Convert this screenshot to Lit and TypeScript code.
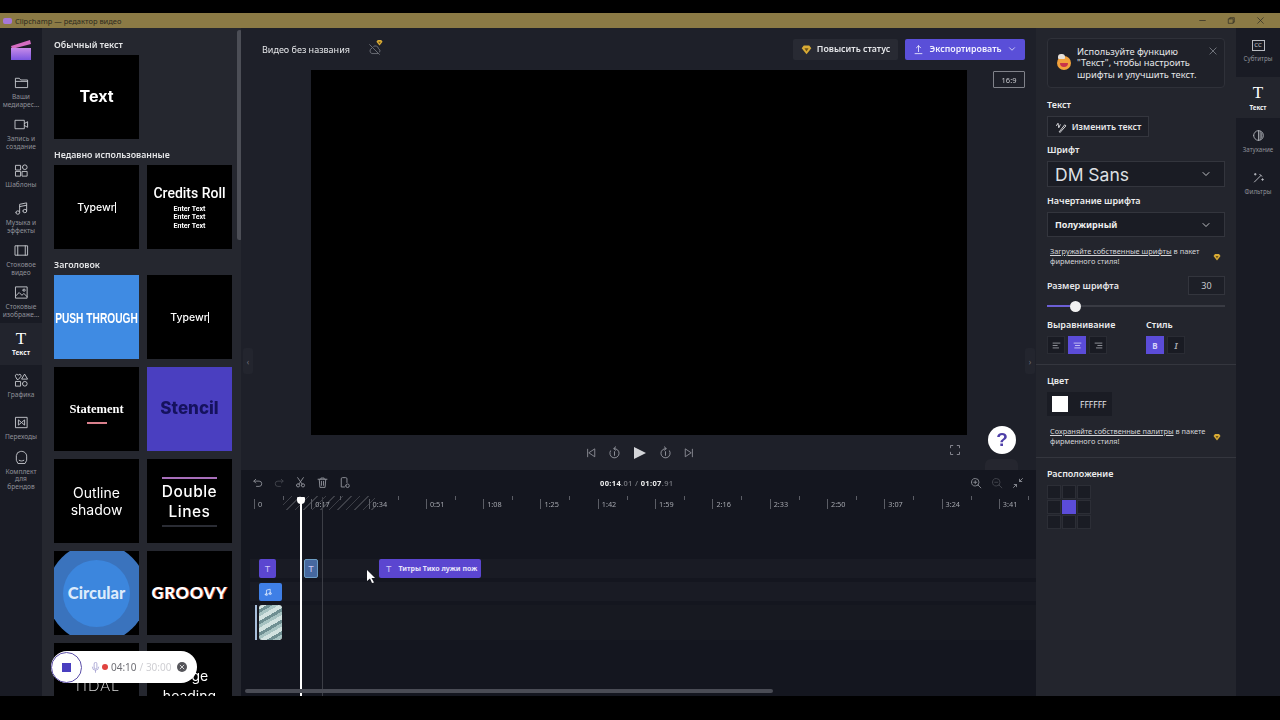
import { LitElement, html, css } from "lit";
import { customElement } from "lit/decorators.js";

const ic = (d: string, size = 14, sw = 1.2) => html`<svg class="ic" width=${size} height=${size} viewBox="0 0 16 16" fill="none" stroke="currentColor" stroke-width=${sw} stroke-linecap="round" stroke-linejoin="round"><path d=${d}></path></svg>`;

const I = {
  folder: "M1.5 13V3.5h4.2l1.4 1.8h7.4V13z M1.5 6.8h13",
  video: "M1.5 3.5h9.5v9H1.5z M11 7l3.5-2v6L11 9",
  tpl: "M2 2.5h5v5H2z M9 4.5a2.5 2.5 0 1 0 5 0a2.5 2.5 0 1 0-5 0 M2 9h5v5H2z M9 9h5v5H9z",
  music: "M6 12V3.5l7.5-1.5V10.5 M6 6l7.5-1.5 M2 12.3a2 1.8 0 1 0 4 0a2 1.8 0 1 0-4 0 M9.5 10.7a2 1.8 0 1 0 4 0a2 1.8 0 1 0-4 0",
  film: "M1.5 3h13v10h-13z M4 3v10 M12 3v10",
  image: "M2 2h12v12H2z M2 11.5l3.5-3.5 3 3 2-2 3.5 3.5 M9.5 5.5a1.2 1.2 0 1 0 2.4 0a1.2 1.2 0 1 0-2.4 0",
  shapes: "M3 6.5L1.5 3.5a1.4 1.4 0 0 1 3-1a1.4 1.4 0 0 1 3 1L5 6.5z M11.5 1.5l3 5h-6z M2 9h5v5H2z M9 11.5a2.5 2.5 0 1 0 5 0a2.5 2.5 0 1 0-5 0",
  trans: "M2 2.5h12v11H2z M5 5.5l3 2.5-3 2.5z M11 5.5L8 8l3 2.5z",
  brand: "M4 14l-1.5-3V6A5 5 0 0 1 7 1.5c3.5-.5 6.5 2 6.5 5V11L12 14z M5.5 11c1.5 1 3.5 1 5 0",
  undo: "M5 3L2.5 5.5 5 8 M2.5 5.5h7a3.5 3.5 0 0 1 0 7H6",
  redo: "M11 3l2.5 2.5L11 8 M13.5 5.5h-7a3.5 3.5 0 0 0 0 7H10",
  cut: "M3 11.5a2 2 0 1 0 4 0a2 2 0 1 0-4 0 M9 11.5a2 2 0 1 0 4 0a2 2 0 1 0-4 0 M6 10L11.5 2 M10 10L4.5 2",
  trash: "M2.5 4h11 M6 4V2.5h4V4 M4 4l.8 10h6.4L12 4 M6.7 6.5v5 M9.3 6.5v5",
  detach: "M8 13.5H4V3.5a1.5 1.5 0 0 1 1.5-1.5h4A1.5 1.5 0 0 1 11 3.5V8 M9.5 12a2.2 2.2 0 1 0 4.4 0a2.2 2.2 0 1 0-4.4 0",
  start: "M3.5 3v10 M13 3v10L5.5 8z",
  end: "M12.5 3v10 M3 3v10l7.5-5z",
  back: "M9.5 1L7 3.2 9.5 5.2 M7.5 3.2A5.7 5.7 0 1 1 3 6 M8 7v4.5",
  fwd: "M6.5 1L9 3.2 6.5 5.2 M8.5 3.2A5.7 5.7 0 1 0 13 6 M8 7v4.5",
  full: "M2 5V2h3 M11 2h3v3 M14 11v3h-3 M5 14H2v-3",
  zin: "M2 7a5 5 0 1 0 10 0a5 5 0 1 0-10 0 M10.5 10.5L14.5 14.5 M7 5v4 M5 7h4",
  zout: "M2 7a5 5 0 1 0 10 0a5 5 0 1 0-10 0 M10.5 10.5L14.5 14.5 M5 7h4",
  fit: "M14 2L10 6 M10 3v3h3 M2 14l4-4 M3 10h3v3",
  cloud: "M2 2l12 12 M4.5 6.5A3.5 3.5 0 0 0 4.8 13H12 M7 4a4 4 0 0 1 6 3a3 3 0 0 1 1.5 4",
  upload: "M8 11V2.5 M5 5.5l3-3 3 3 M3 14h10",
  chev: "M4 6l4 4 4-4",
  close: "M3 3l10 10 M13 3L3 13",
  pen: "M2 6l2-3 1 6 2-4 M6 14L13 5l1.5 1.5L7 15z",
  alignL: "M3 4.5h10 M3 8h6 M3 11.5h8",
  alignC: "M3 4.5h10 M5 8h6 M4 11.5h8",
  alignR: "M3 4.5h10 M7 8h6 M5 11.5h8",
  wand: "M3 13.5L11 5.5 M9.5 4l2.5 2.5 M4 3v2 M3 4h2 M13 9.5v2 M12 10.5h2",
  mic: "M6 2.5a2 2 0 0 1 4 0V8a2 2 0 0 1-4 0z M3.5 7.5a4.5 4.5 0 0 0 9 0 M8 12v3",
};

const gem = (size = 10) => html`<svg width=${size} height=${size} viewBox="0 0 16 16"><path d="M4 2h8l3 4-7 9-7-9z" fill="#d9ab35"></path><path d="M5 6h6l-3 5z" fill="#6d5316"></path></svg>`;

const railItems: [string, string, boolean?][] = [
  [I.folder, "Ваши\nмедиарес..."],
  [I.video, "Запись и\nсоздание"],
  [I.tpl, "Шаблоны"],
  [I.music, "Музыка и\nэффекты"],
  [I.film, "Стоковое\nвидео"],
  [I.image, "Стоковые\nизображе..."],
  ["T", "Текст", true],
  [I.shapes, "Графика"],
  [I.trans, "Переходы"],
  [I.brand, "Комплект\nдля\nбрендов"],
];

const ruler = ["0", "0:17", "0:34", "0:51", "1:08", "1:25", "1:42", "1:59", "2:16", "2:33", "2:50", "3:07", "3:24", "3:41"];

@customElement("app-root")
export class AppRoot extends LitElement {
  static styles = css`
    :host { display: block; width: 1280px; height: 720px; background: #000; overflow: hidden; font-family: "Noto Sans", "Liberation Sans", sans-serif; color: #e6e7ea; position: relative; }
    * { box-sizing: border-box; }
    svg { display: block; flex: none; }
    .screen { display: flex; flex-direction: column; height: 696px; padding-top: 13px; filter: blur(0.35px); }
    .title { height: 15px; flex: none; background: #8b7a45; display: flex; align-items: center; padding: 0 15px 0 3px; gap: 3px; font-size: 7.5px; color: #2c2a20; }
    .title .logo { width: 9px; height: 6px; background: #a678d8; border-radius: 2px; }
    .title .grow { flex: 1; }
    .win { display: flex; gap: 20px; color: #2a2822; }
    .app { flex: 1; min-height: 0; display: flex; }

    .rail { width: 42px; flex: none; background: #191b24; display: flex; flex-direction: column; align-items: stretch; overflow: hidden; }
    .brand { height: 43px; flex: none; display: flex; align-items: center; justify-content: center; }
    .ritem { height: 42px; flex: none; display: flex; flex-direction: column; align-items: center; justify-content: center; gap: 3px; font-size: 6.6px; line-height: 7.6px; text-align: center; color: #8f9199; white-space: pre-line; }
    .ritem svg { color: #c2c4ca; }
    .ritem.on { background: #22242d; color: #f2f2f4; font-weight: 700; }
    .bigt { font-family: "Liberation Serif", serif; font-size: 17px; line-height: 15px; color: #fff; font-weight: 400; }

    .lib { width: 199px; flex: none; background: #25272f; padding: 9px 0 0 12px; overflow: hidden; display: flex; flex-direction: column; position: relative; }
    .lib h3 { margin: 0; font-size: 8.8px; line-height: 16px; font-weight: 600; color: #e4e5e7; height: 18px; flex: none; }
    .lib .grid { display: grid; grid-template-columns: 85px 85px; gap: 8px; margin-bottom: 8px; flex: none; }
    .card { height: 84px; background: #000; display: flex; align-items: center; justify-content: center; text-align: center; color: #fff; overflow: hidden; position: relative; }
    .plain { font-family: Inter, sans-serif; font-weight: 700; font-size: 16px; padding-bottom: 2px; }
    .vscroll { position: absolute; right: -1px; top: 2px; width: 5px; height: 210px; background: #4c4e56; border-radius: 3px; }
    .push { background: #3f8be3; }
    .push text { font-family: "Liberation Sans", sans-serif; font-weight: 700; font-size: 10.2px; fill: #fff; }
    .typew { font-family: "Inter", sans-serif; font-weight: 500; font-size: 10.5px; }
    .typew i { display: inline-block; width: 1px; height: 11px; background: #fff; vertical-align: -2px; }
    .credits { flex-direction: column; font-family: Roboto, sans-serif; gap: 1px; font-weight: 700; font-size: 7px; line-height: 8.2px; }
    .credits b { font-size: 14px; line-height: 18px; font-weight: 500; margin-bottom: 2px; }
    .state { flex-direction: column; font-family: "Liberation Serif", serif; font-weight: 700; font-size: 12.5px; gap: 5px; padding-top: 8px; }
    .state i { width: 20px; height: 2px; background: #d9808c; }
    .stencil { background: #4a3fc0; color: #15125e; font-family: Inter, sans-serif; font-weight: 800; font-size: 17px; padding-bottom: 2px; }
    .outline { font-family: Inter, sans-serif; font-size: 14px; line-height: 17px; font-weight: 400; }
    .double { flex-direction: column; font-family: Inter, sans-serif; font-size: 15.5px; line-height: 20px; letter-spacing: .5px; font-weight: 500; padding-top: 1px; }
    .double i { width: 55px; height: 2px; background: #a86fbb; flex: none; }
    .double i.a { margin-bottom: 3px; }
    .double i.b { margin-top: 3px; }
    .outerc { width: 100px; height: 100px; flex: none; border-radius: 50%; background: #3a73bd; display: flex; align-items: center; justify-content: center; }
    .innerc { width: 67px; height: 67px; border-radius: 50%; background: #3c86dd; display: flex; align-items: center; justify-content: center; font-family: Lato, sans-serif; font-weight: 900; font-size: 16.5px; color: #dcebfb; }
    .groovy { font-family: Lato, sans-serif; font-weight: 900; font-size: 16.5px; letter-spacing: .8px; text-shadow: 1px 0 0 #b9524e; }
    .tidal { font-family: Lato, sans-serif; font-size: 15px; letter-spacing: 1px; color: #d8d8d8; font-weight: 300; }
    .large { font-family: Inter, sans-serif; font-size: 14px; line-height: 20px; padding-top: 1px; }

    .mid { width: 795px; flex: none; display: flex; flex-direction: column; position: relative; background: #1e2029; }
    .stage { height: 442px; flex: none; display: flex; flex-direction: column; position: relative; }
    .topbar { height: 42px; flex: none; display: flex; align-items: center; padding: 0 11px 0 21px; }
    .name { font-size: 9px; color: #e4e5e8; }
    .cloud { margin-left: 18px; color: #7a7c84; position: relative; }
    .cloud span { position: absolute; left: 8px; top: -4px; }
    .up { margin-left: auto; height: 21px; width: 105px; background: #282a33; border-radius: 2px; display: flex; align-items: center; justify-content: center; gap: 5px; font-size: 8.8px; font-weight: 600; color: #e6e7ea; }
    .exp { margin-left: 7px; height: 21px; width: 120px; background: #5a4fd8; border-radius: 2px; display: flex; align-items: center; justify-content: center; gap: 5px; font-size: 8.8px; font-weight: 600; color: #f2f2ff; }
    .view { height: 365px; flex: none; display: flex; padding-left: 70px; align-items: flex-start; }
    .black { width: 656px; height: 365px; background: #000; flex: none; }
    .ratio { margin-left: 26px; margin-top: 1px; width: 32px; height: 17px; border: 1px solid #80828a; border-radius: 1px; font-size: 7.5px; display: flex; align-items: center; justify-content: center; color: #c6c7cc; }
    .play { flex: 1; display: flex; align-items: center; justify-content: center; gap: 11px; color: #8e9098; position: relative; padding-left: 2px; }
    .play .tri { width: 0; height: 0; border-left: 12px solid #d3d4d8; border-top: 6.5px solid transparent; border-bottom: 6.5px solid transparent; margin: 0 2px; }
    .fs { position: absolute; left: 708px; top: 9px; color: #8e9098; }
    .help { position: absolute; left: 747px; top: 398px; width: 28px; height: 28px; border-radius: 50%; background: #fff; color: #4e3fa8; font-weight: 800; font-size: 19px; display: flex; align-items: center; justify-content: center; font-family: "Liberation Sans", sans-serif; }
    .helptab { position: absolute; left: 744px; top: 431px; width: 33px; height: 11px; background: #2a2c34; border-radius: 6px 6px 0 0; opacity: .6; }
    .grip { position: absolute; top: 320px; width: 10px; height: 26px; background: #23252e; color: #6f7179; font-size: 8px; display: flex; align-items: center; justify-content: center; border-radius: 3px; }
    .gl { left: 2px; }
    .gr { left: 784px; }

    .tl { flex: 1; min-height: 0; background: #14161f; display: flex; flex-direction: column; position: relative; overflow: hidden; }
    .tools { height: 25px; flex: none; display: flex; align-items: center; padding: 0 9px 0 11px; gap: 9px; position: relative; }
    .tools svg { color: #8c8e96; }
    .tools .dim svg { color: #44464e; }
    .time { position: absolute; left: 359px; top: 8px; font-size: 7.5px; color: #6f7178; letter-spacing: .35px; font-weight: 600; white-space: nowrap; }
    .time b { color: #eceded; font-weight: 700; }
    .tr { margin-left: auto; display: flex; gap: 9px; padding-right: 3px; }
    .ruler { height: 18px; flex: none; display: flex; padding-left: 13px; align-items: center; position: relative; }
    .tick { width: 57.3px; flex: none; font-size: 7.3px; color: #a4a6ad; border-left: 1px solid #5b5d65; height: 10px; line-height: 10px; padding-left: 3px; position: relative; }
    .tick::after { content: ""; position: absolute; left: 28px; top: -3px; width: 1px; height: 4px; background: #5b5d65; }
    .hatch { position: absolute; left: 42px; top: 1px; width: 92px; height: 14px; background: repeating-linear-gradient(135deg, #3c3e46 0 1px, transparent 1px 6px); }
    .tracks { padding-top: 46px; display: flex; flex-direction: column; gap: 4px; }
    .track { height: 19px; background: #191b24; display: flex; padding-left: 9px; margin-left: 9px; }
    .track.v { height: 35px; background: #171921; }
    .clip { height: 100%; background: #5b46d0; border-radius: 2px; display: flex; align-items: center; justify-content: center; color: #cfc8f6; font-size: 9px; font-family: "Liberation Sans", sans-serif; flex: none; }
    .c1 { width: 17px; }
    .c2 { width: 14px; margin-left: 28px; background: #46689f; border: 1px solid #6c9cc3; }
    .c3 { width: 102px; margin-left: 61px; justify-content: flex-start; padding-left: 7px; gap: 7px; overflow: hidden; }
    .c3 span { font-family: "Noto Sans", sans-serif; font-size: 7px; font-weight: 700; color: #e8e4fb; white-space: nowrap; }
    .c4 { width: 23px; background: #3f7fe6; color: #e6efff; margin-top: 1px; height: 18px; justify-content: flex-start; padding-left: 4px; }
    .c5 { width: 23px; border-radius: 3px; background: repeating-linear-gradient(150deg, #d2e2e0 0 4px, #6f8f92 4px 7px, #a7c3c2 7px 10px); }
    .vh { width: 2px; height: 35px; background: #a9c0dc; margin-left: -4px; margin-right: 2px; flex: none; }
    .phead { position: absolute; left: 59px; top: 27px; bottom: 0; width: 2px; background: #fff; }
    .phead::before { content: ""; position: absolute; left: -3px; top: 0; width: 8px; height: 7px; background: #fff; border-radius: 1px 1px 4px 4px; }
    .pline { position: absolute; left: 81px; top: 27px; bottom: 0; width: 1px; background: #3c3e46; }
    .hs { position: absolute; left: 4px; bottom: 3px; width: 528px; height: 4px; background: #4a4c55; border-radius: 2px; }
    .cursor { position: absolute; left: 126px; top: 100px; }

    .panel { width: 200px; flex: none; background: #23252d; padding: 10px 11px 0; display: flex; flex-direction: column; font-size: 9px; font-weight: 600; }
    .tip { height: 50px; flex: none; border: 1px solid #2f3139; border-radius: 4px; display: flex; align-items: center; padding: 0 6px 0 9px; gap: 6px; font-size: 9.3px; line-height: 11.5px; font-weight: 400; color: #e6e7ea; background: #1f2129; }
    .emoji { width: 14px; height: 14px; border-radius: 50%; background: #f2a13c; flex: none; position: relative; }
    .emoji::before { content: ""; position: absolute; left: 1px; top: -2px; width: 7px; height: 5px; border-radius: 3px 3px 1px 1px; background: #e6e0d8; }
    .emoji::after { content: ""; position: absolute; left: 3px; top: 7px; width: 8px; height: 4px; border-radius: 0 0 4px 4px; background: #c8324a; }
    .tip .x { color: #8a8c94; align-self: flex-start; margin-top: 7px; margin-left: auto; }
    .lab { line-height: 12px; color: #eceded; flex: none; }
    .m7 { margin-top: 7px; } .m8 { margin-top: 8px; } .m10 { margin-top: 10px; } .m11 { margin-top: 11px; }
    .edit { margin-top: 5px; width: 102px; height: 21px; background: #1d1f27; border: 1px solid #34363e; display: flex; align-items: center; justify-content: center; gap: 5px; font-size: 8.8px; font-weight: 600; flex: none; }
    .sel { background: #1a1c24; border: 1px solid #33353d; display: flex; align-items: center; justify-content: space-between; flex: none; padding: 0 12px 0 7px; color: #eee; }
    .sel svg { color: #d0d1d5; }
    .sel.f { height: 26px; margin-top: 5px; font-size: 17.5px; font-weight: 400; font-family: "Inter", sans-serif; color: #dfe0e3; }
    .sel.w { height: 25px; margin-top: 5px; font-size: 9px; font-weight: 700; }
    .promo { margin-top: 10px; display: flex; align-items: center; font-size: 7.4px; line-height: 9.5px; font-weight: 400; padding-left: 3px; color: #d4d5d9; justify-content: space-between; padding-right: 4px; flex: none; }
    .promo div { width: 162px; }
    .promo.second { margin-top: 11px; }
    .promo u { text-underline-offset: 1px; }
    .sizerow { margin-top: 10px; display: flex; justify-content: space-between; align-items: center; flex: none; }
    .num { width: 37px; height: 19px; border: 1px solid #33353d; background: #1d1f27; display: flex; align-items: center; justify-content: center; font-weight: 400; color: #c9cacf; }
    .slider { margin-top: 5px; height: 12px; display: flex; align-items: center; flex: none; }
    .s1 { width: 23px; height: 2px; background: #6c5fd6; }
    .thumb { width: 11px; height: 11px; border-radius: 50%; background: #f2f2f2; flex: none; }
    .s2 { flex: 1; height: 2px; background: #393b43; }
    .two { margin-top: 7px; display: flex; flex: none; }
    .two > div:first-child { width: 99px; }
    .btns { display: flex; gap: 3px; margin-top: 5px; }
    .b { width: 18px; height: 18px; background: #191b23; border: 1px solid #2a2c34; display: flex; align-items: center; justify-content: center; color: #a5a7ae; font-size: 8px; font-weight: 700; flex: none; }
    .b.on { background: #5b4cd8; border-color: #5b4cd8; color: #d8d4fa; }
    .rule { height: 1px; background: #34363e; margin-left: -11px; margin-right: -11px; flex: none; }
    .col { width: 65px; height: 24px; margin-top: 5px; background: #1a1c24; display: flex; align-items: center; padding-left: 5px; gap: 12px; font-weight: 400; font-size: 8.5px; flex: none; }
    .col i { width: 16px; height: 16px; background: #fff; }
    .pos { margin-top: 5px; display: grid; grid-template-columns: repeat(3, 14px); grid-auto-rows: 14px; gap: 1px; flex: none; }
    .pos i { background: #1a1c24; border: 1px solid #2c2e36; }
    .pos i.on { background: #5b4cd8; border-color: #5b4cd8; }

    .rrail { width: 44px; flex: none; background: #191b24; display: flex; flex-direction: column; }
    .ri { flex: none; display: flex; flex-direction: column; align-items: center; justify-content: center; gap: 3px; font-size: 6.2px; color: #8f9199; }
    .ri svg { color: #b9bbc1; }
    .ri.on { background: #23252d; color: #f2f2f4; font-weight: 700; }
    .r1 { height: 49px; padding-bottom: 3px; padding-top: 1px; }
    .r2 { height: 41px; padding-top: 1px; }
    .r3 { height: 45px; padding-top: 1px; }
    .r4 { height: 45px; padding-bottom: 5px; }
    .cc { width: 13px; height: 11px; border: 1px solid #b9bbc1; font-size: 6px; line-height: 9px; text-align: center; color: #c9cbd1; }

    .rec { position: absolute; left: 51px; top: 651px; width: 146px; height: 32px; border-radius: 16px; background: #fff; display: flex; align-items: center; color: #8c8c92; font-size: 10px; filter: blur(0.35px); }
    .stopc { width: 31px; height: 31px; border-radius: 50%; border: 1px solid #5c4fa8; background: #fff; display: flex; align-items: center; justify-content: center; flex: none; margin-right: 8px; }
    .stopc i { width: 9px; height: 9px; background: #4a3fc0; }
    .rec svg { color: #a29ed0; }
    .dot { width: 6px; height: 6px; border-radius: 50%; background: #e0433f; margin: 0 3px 0 1px; flex: none; }
    .rec b { font-weight: 400; color: #6f6f75; }
    .rec em { font-style: normal; color: #cfcfd3; margin-left: 3px; }
    .xc { width: 10px; height: 10px; border-radius: 50%; background: #55555a; margin-left: 6px; display: flex; align-items: center; justify-content: center; flex: none; }
    .xc svg { color: #fff; }
  `;

  private rail() {
    return railItems.map(([d, l, on]) => html`<div class="ritem ${on ? "on" : ""}">${d === "T" ? html`<div class="bigt">T</div>` : ic(d, 15, 1)}<div>${l}</div></div>`);
  }

  render() {
    return html`
      <div class="screen">
        <div class="title">
          <div class="logo"></div><span>Clipchamp — редактор видео</span><div class="grow"></div>
          <div class="win">${ic("M3 8h10", 9)}${ic("M3 5h8v8H3z M5 5V3h8v8h-2", 9)}${ic(I.close, 9)}</div>
        </div>
        <div class="app">
          <nav class="rail">
            <div class="brand">
              <svg width="22" height="22" viewBox="0 0 22 22"><defs><linearGradient id="lg" x1="0" y1="0" x2="0" y2="1"><stop offset="0" stop-color="#c78be8"></stop><stop offset="1" stop-color="#7a55e0"></stop></linearGradient></defs><path d="M1 7L20 1l1 4L2 10z" fill="#d46bc0"></path><rect x="1" y="9" width="20" height="12" fill="url(#lg)"></rect></svg>
            </div>
            ${this.rail()}
          </nav>
          <section class="lib">
            <div class="vscroll"></div>
            <h3>Обычный текст</h3>
            <div class="grid"><div class="card plain">Text</div></div>
            <h3>Недавно использованные</h3>
            <div class="grid">
              <div class="card typew">Typewr<i></i></div>
              <div class="card credits"><b>Credits Roll</b>Enter Text<br />Enter Text<br />Enter Text</div>
            </div>
            <h3>Заголовок</h3>
            <div class="grid">
              <div class="card push"><svg width="85" height="84" viewBox="0 0 85 84"><text transform="scale(1 1.5)" x="42.5" y="32" text-anchor="middle">PUSH THROUGH</text></svg></div>
              <div class="card typew">Typewr<i></i></div>
              <div class="card state">Statement<i></i></div>
              <div class="card stencil">Stencil</div>
              <div class="card outline">Outline<br />shadow</div>
              <div class="card double"><i class="a"></i><div>Double<br />Lines</div><i class="b"></i></div>
              <div class="card"><div class="outerc"><div class="innerc">Circular</div></div></div>
              <div class="card groovy">GROOVY</div>
              <div class="card tidal">TIDAL</div>
              <div class="card large">Large<br />heading</div>
            </div>
          </section>
          <main class="mid">
            <div class="stage">
              <div class="topbar">
                <span class="name">Видео без названия</span>
                <span class="cloud">${ic(I.cloud, 13, 1)}<span>${gem(7)}</span></span>
                <div class="up">${gem(11)}Повысить статус</div>
                <div class="exp">${ic(I.upload, 11)}Экспортировать${ic(I.chev, 10)}</div>
              </div>
              <div class="view"><div class="black"></div><div class="ratio">16:9</div></div>
              <div class="play">
                ${ic(I.start, 12)}${ic(I.back, 13)}<div class="tri"></div>${ic(I.fwd, 13)}${ic(I.end, 12)}
                <div class="fs">${ic(I.full, 12)}</div>
              </div>
              <div class="help">?</div>
              <div class="helptab"></div>
              <div class="grip gl">‹</div>
              <div class="grip gr">›</div>
            </div>
            <div class="tl">
              <div class="tools">
                ${ic(I.undo, 12)}<span class="dim">${ic(I.redo, 12)}</span>${ic(I.cut, 13)}${ic(I.trash, 13)}${ic(I.detach, 13)}
                <div class="time"><b>00:14</b>.01 / <b>01:07</b>.91</div>
                <div class="tr">${ic(I.zin, 12)}<span class="dim">${ic(I.zout, 12)}</span>${ic(I.fit, 12)}</div>
              </div>
              <div class="ruler">
                <div class="hatch"></div>
                ${ruler.map((t) => html`<div class="tick">${t}</div>`)}
              </div>
              <div class="tracks">
                <div class="track">
                  <div class="clip c1">T</div><div class="clip c2">T</div>
                  <div class="clip c3">T<span>Титры Тихо лужи пож</span></div>
                </div>
                <div class="track"><div class="clip c4">${ic("M5.5 12V5l6-1.5v7 M3.5 12a2 1.5 0 1 0 4 0a2 1.5 0 1 0-4 0 M9.5 10.5a2 1.5 0 1 0 4 0a2 1.5 0 1 0-4 0", 10)}</div></div>
                <div class="track v"><div class="vh"></div><div class="clip c5"></div></div>
              </div>
              <div class="pline"></div>
              <div class="phead"></div>
              <div class="hs"></div>
              <svg class="cursor" width="9" height="13" viewBox="0 0 9 13"><path d="M0 0l8 8H4.5L7 12.5 5 13 3 8.5 0 11z" fill="#fff"></path></svg>
            </div>
          </main>
          <aside class="panel">
            <div class="tip"><div class="emoji"></div><div>Используйте функцию<br />"Текст", чтобы настроить<br />шрифты и улучшить текст.</div><span class="x">${ic(I.close, 10)}</span></div>
            <div class="lab m11">Текст</div>
            <div class="edit">${ic(I.pen, 12)}Изменить текст</div>
            <div class="lab m7">Шрифт</div>
            <div class="sel f">DM Sans${ic(I.chev, 12)}</div>
            <div class="lab m8">Начертание шрифта</div>
            <div class="sel w">Полужирный${ic(I.chev, 12)}</div>
            <div class="promo"><div><u>Загружайте собственные шрифты</u> в пакет фирменного стиля!</div>${gem(8)}</div>
            <div class="sizerow"><span>Размер шрифта</span><div class="num">30</div></div>
            <div class="slider"><div class="s1"></div><div class="thumb"></div><div class="s2"></div></div>
            <div class="two">
              <div><div class="lab">Выравнивание</div><div class="btns"><div class="b">${ic(I.alignL, 11)}</div><div class="b on">${ic(I.alignC, 11)}</div><div class="b">${ic(I.alignR, 11)}</div></div></div>
              <div><div class="lab">Стиль</div><div class="btns"><div class="b on">B</div><div class="b"><i>I</i></div></div></div>
            </div>
            <div class="rule m10"></div>
            <div class="lab m10">Цвет</div>
            <div class="col"><i></i>FFFFFF</div>
            <div class="promo second"><div><u>Сохраняйте собственные палитры</u> в пакете фирменного стиля!</div>${gem(8)}</div>
            <div class="rule m11"></div>
            <div class="lab m10">Расположение</div>
            <div class="pos"><i></i><i></i><i></i><i></i><i class="on"></i><i></i><i></i><i></i><i></i></div>
          </aside>
          <div class="rrail">
            <div class="ri r1"><div class="cc">CC</div>Субтитры</div>
            <div class="ri r2 on"><div class="bigt">T</div>Текст</div>
            <div class="ri r3">${ic("M2 8a6 6 0 1 0 12 0a6 6 0 1 0-12 0 M8 2v12 M10 3v10 M12 5v6", 13, 1)}Затухание</div>
            <div class="ri r4">${ic(I.wand, 13)}Фильтры</div>
          </div>
        </div>
      </div>
      <div class="rec">
        <div class="stopc"><i></i></div>${ic(I.mic, 11)}<span class="dot"></span><b>04:10</b><em>/ 30:00</em>
        <span class="xc">${ic(I.close, 6, 2)}</span>
      </div>
    `;
  }
}
